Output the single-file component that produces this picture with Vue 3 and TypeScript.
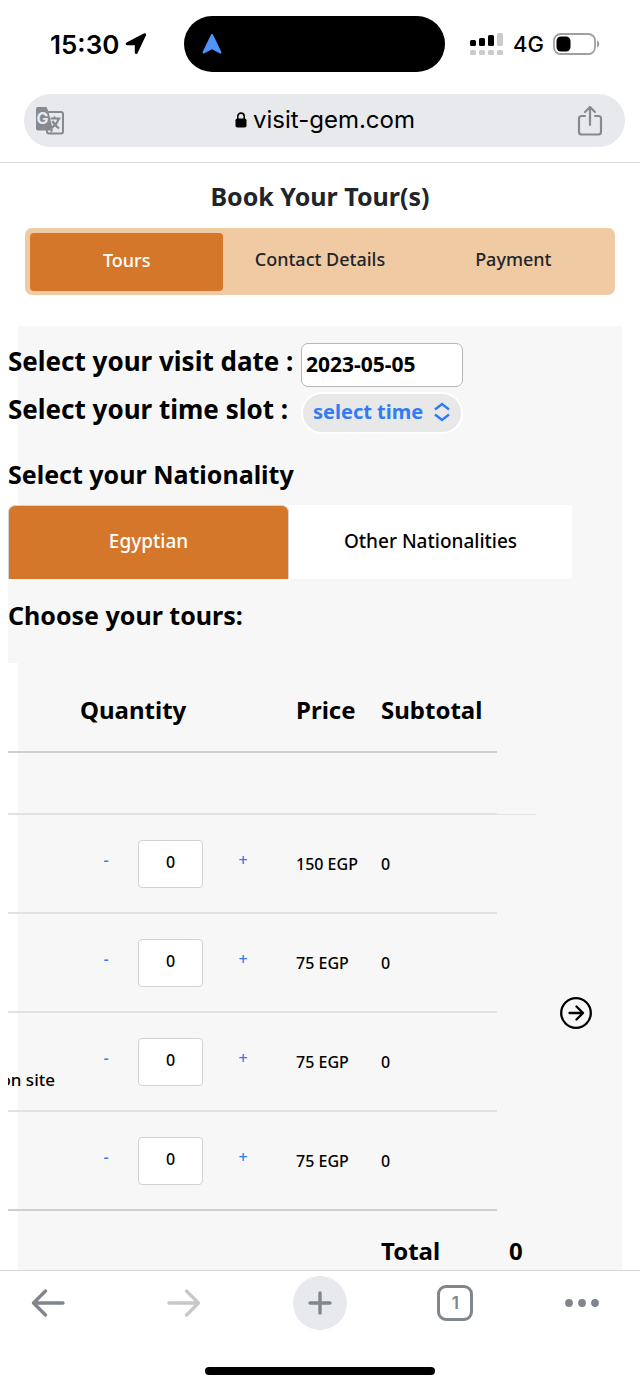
<script setup lang="ts">
import { computed, ref } from 'vue'

interface Ticket {
  id: number
  name: string
  price: number
  quantity: number
}

const steps = ['Tours', 'Contact Details', 'Payment']
const nationalities = ['Egyptian', 'Other Nationalities']

const activeStep = ref(0)
const activeNationality = ref(0)
const visitDate = ref('2023-05-05')
const timeSlot = ref('select time slot')

const tickets = ref<Ticket[]>([
  { id: 1, name: '', price: 150, quantity: 0 },
  { id: 2, name: '', price: 75, quantity: 0 },
  { id: 3, name: 'on site', price: 75, quantity: 0 },
  { id: 4, name: '', price: 75, quantity: 0 },
])

const total = computed(() => tickets.value.reduce((sum, t) => sum + t.price * t.quantity, 0))

function change(ticket: Ticket, by: number) {
  ticket.quantity = Math.max(0, ticket.quantity + by)
}
</script>

<template>
  <div class="screen">
    <header class="browser-top">
      <div class="status">
        <div class="clock">
          <span>15:30</span>
          <svg width="22" height="22" viewBox="0 0 22 22" aria-hidden="true">
            <path d="M20.400 1.600 11.800 19.800c-.3.700-1.200.5-1.200-.2V11.400H2.200c-.8 0-1-.9-.3-1.200L19.600 1z" fill="#000" stroke="#000" stroke-width="1.600" stroke-linejoin="round" />
          </svg>
        </div>
        <div class="island">
          <svg width="20" height="22" viewBox="0 0 20 22" aria-hidden="true">
            <path d="M10 2 1.500 19.500 10 15l8.500 4.500z" fill="#4f94f8" stroke="#4f94f8" stroke-width="2" stroke-linejoin="round" />
          </svg>
        </div>
        <div class="signals">
          <svg width="34" height="24" viewBox="0 0 34 24" aria-hidden="true">
            <g fill="#000">
              <rect x="0" y="8" width="6" height="6" rx="1.500" />
              <rect x="9" y="6" width="6" height="8" rx="1.500" />
              <rect x="18" y="3" width="6" height="11" rx="1.500" />
            </g>
            <g fill="#cbcbcb">
              <rect x="27" y="1" width="6" height="13" rx="1.500" />
              <rect x="0" y="18" width="6" height="5" rx="1.500" />
              <rect x="9" y="18" width="6" height="5" rx="1.500" />
              <rect x="18" y="18" width="6" height="5" rx="1.500" />
              <rect x="27" y="18" width="6" height="5" rx="1.500" />
            </g>
          </svg>
          <span class="network">4G</span>
          <svg width="48" height="22" viewBox="0 0 48 22" aria-hidden="true">
            <rect x="1" y="1" width="41" height="20" rx="6.500" fill="none" stroke="#a0a0a0" stroke-width="1.800" />
            <rect x="3.500" y="3.500" width="14" height="15" rx="4.500" fill="#000" />
            <path d="M44 7.500c3 1 3 6 0 7z" fill="#a0a0a0" />
          </svg>
        </div>
      </div>

      <div class="address">
        <button type="button" class="plain" aria-label="Translate page">
          <svg width="30" height="30" viewBox="0 0 30 30">
            <rect x="12" y="6" width="16" height="21.500" rx="2" fill="#e8e9ed" stroke="#858a8d" stroke-width="2" />
            <path d="M3 1h8.500l1.800 4L18 24.500H3a2 2 0 0 1-2-2V3a2 2 0 0 1 2-2z" fill="#858a8d" />
            <path d="M15.500 24.500H18l-2.500 3z" fill="#858a8d" />
            <text x="1.500" y="18" class="translate-mark">G</text>
            <path d="M15.500 12.500h10M19.500 10.500v2M23.500 12.500c-.8 4-3 6.500-6.500 9M17.500 15c1.500 3.500 4 5.500 6.500 7.500" fill="none" stroke="#858a8d" stroke-width="2.200" />
          </svg>
        </button>
        <div class="site">
          <svg width="12" height="16" viewBox="0 0 12 16" aria-hidden="true">
            <rect x="0.500" y="6.500" width="11" height="9" rx="1.800" fill="#000" />
            <path d="M2.800 7V4.300a3.200 3.200 0 0 1 6.400 0V7" fill="none" stroke="#000" stroke-width="1.600" />
          </svg>
          <span>visit-gem.com</span>
        </div>
        <button type="button" class="plain" aria-label="Share">
          <svg width="26" height="32" viewBox="0 0 26 32" fill="none" stroke="#858a8d" stroke-width="2.200" stroke-linecap="round" stroke-linejoin="round">
            <path d="M8 11H4.500A2.500 2.500 0 0 0 2 13.500V27a2.500 2.500 0 0 0 2.500 2.500h17A2.500 2.500 0 0 0 24 27V13.500a2.500 2.500 0 0 0-2.500-2.500H18M13 20V2M8 7l5-5 5 5" />
          </svg>
        </button>
      </div>
    </header>

    <main>
      <h1>Book Your Tour(s)</h1>
      <nav class="steps" aria-label="Booking steps">
        <button
          v-for="(step, i) in steps"
          :key="step"
          type="button"
          :class="{ active: i === activeStep }"
          @click="activeStep = i"
        >{{ step }}</button>
      </nav>

      <section class="booking">
        <div class="content">
          <div class="fields">
            <label for="visit-date">Select your visit date :</label>
            <input id="visit-date" v-model="visitDate" type="text" class="date">
            <label for="time-slot">Select your time slot :</label>
            <div class="slot">
              <select id="time-slot" v-model="timeSlot">
                <option>select time slot</option>
              </select>
              <svg width="18" height="20" viewBox="0 0 18 20" aria-hidden="true">
                <path d="M2 7.500 9 2l7 5.500M2 12.500 9 18l7-5.500" fill="none" stroke="#2f7cf6" stroke-width="2.400" />
              </svg>
            </div>
          </div>

          <h2 class="nationality-title">Select your Nationality</h2>
          <div class="tabs" role="tablist">
            <button
              v-for="(name, i) in nationalities"
              :key="name"
              type="button"
              role="tab"
              :aria-selected="i === activeNationality"
              :class="{ active: i === activeNationality }"
              @click="activeNationality = i"
            >{{ name }}</button>
          </div>
          <h2 class="tours-title">Choose your tours:</h2>

          <div class="tickets">
            <table>
              <colgroup>
                <col class="c-name"><col class="c-quantity"><col class="c-price"><col class="c-subtotal"><col class="c-extra">
              </colgroup>
              <thead>
                <tr>
                  <th></th>
                  <th scope="col">Quantity</th>
                  <th scope="col">Price</th>
                  <th scope="col">Subtotal</th>
                  <td></td>
                </tr>
              </thead>
              <tbody>
                <tr class="group">
                  <td colspan="4"></td>
                  <td></td>
                </tr>
                <tr v-for="t in tickets" :key="t.id" class="ticket">
                  <td class="name"><div>{{ t.name }}</div></td>
                  <td class="quantity">
                    <div class="stepper">
                      <button type="button" aria-label="Remove one" @click="change(t, -1)">-</button>
                      <input v-model.number="t.quantity" type="text" inputmode="numeric" aria-label="Quantity">
                      <button type="button" aria-label="Add one" @click="change(t, 1)">+</button>
                    </div>
                  </td>
                  <td>{{ t.price }} EGP</td>
                  <td>{{ t.price * t.quantity }}</td>
                  <td></td>
                </tr>
              </tbody>
              <tfoot>
                <tr>
                  <td colspan="3"></td>
                  <th scope="row">Total</th>
                  <td class="total">{{ total }}</td>
                </tr>
              </tfoot>
            </table>
            <button type="button" class="plain next" aria-label="Scroll right">
              <svg width="32" height="32" viewBox="0 0 32 32" fill="none" stroke="#000" stroke-width="2.300" stroke-linecap="round" stroke-linejoin="round">
                <circle cx="16" cy="16" r="14.800" />
                <path d="M9.500 16h13.500M16.500 9.500 23 16l-6.500 6.500" />
              </svg>
            </button>
          </div>
        </div>
      </section>
    </main>

    <footer class="toolbar">
      <div class="tools">
        <button type="button" class="plain" aria-label="Back">
          <svg width="34" height="30" viewBox="0 0 34 30" fill="none" stroke="#80868b" stroke-width="3.400" stroke-linecap="round" stroke-linejoin="round">
            <path d="M32 15H2.500M14.500 3l-12 12 12 12" />
          </svg>
        </button>
        <button type="button" class="plain" aria-label="Forward">
          <svg width="34" height="30" viewBox="0 0 34 30" fill="none" stroke="#c8c8c8" stroke-width="3.400" stroke-linecap="round" stroke-linejoin="round">
            <path d="M2 15h29.500M19.500 3l12 12-12 12" />
          </svg>
        </button>
        <button type="button" class="plain new-tab" aria-label="New tab">
          <svg width="24" height="24" viewBox="0 0 24 24" fill="none" stroke="#80868b" stroke-width="3.400" stroke-linecap="round">
            <path d="M12 2v20M2 12h20" />
          </svg>
        </button>
        <button type="button" class="plain" aria-label="Open tabs"><span class="tab-count">1</span></button>
        <button type="button" class="plain more" aria-label="More">
          <svg width="34" height="8" viewBox="0 0 34 8" fill="#80868b">
            <circle cx="4" cy="4" r="3.900" /><circle cx="17" cy="4" r="3.900" /><circle cx="30" cy="4" r="3.900" />
          </svg>
        </button>
      </div>
      <div class="home"></div>
    </footer>
  </div>
</template>

<style>
body {
  background: #fff;
}
</style>

<style scoped>
.screen,
.screen * {
  box-sizing: border-box;
}
.screen {
  display: flex;
  flex-direction: column;
  min-height: 100vh;
  overflow: hidden;
  color: #000;
  font-family: "Noto Sans", "Open Sans", sans-serif;
}
button,
input,
select {
  font: inherit;
  color: inherit;
  margin: 0;
}
button {
  cursor: pointer;
}
svg {
  display: block;
  flex: none;
}
.plain {
  display: flex;
  align-items: center;
  justify-content: center;
  padding: 0;
  border: 0;
  background: none;
}

/* Browser chrome */
.browser-top {
  padding: 16px 0 15px;
  border-bottom: 1px solid #dadbdd;
  font-family: Inter, Roboto, sans-serif;
}
.status {
  display: grid;
  grid-template-columns: 184fr 261px 195fr;
  align-items: center;
}
.clock {
  display: flex;
  align-items: center;
  gap: 6px;
  padding-left: 50px;
  font-size: 26px;
  font-weight: 600;
}
.island {
  display: flex;
  align-items: center;
  height: 56px;
  padding-left: 18px;
  border-radius: 28px;
  background: #000;
}
.signals {
  display: flex;
  align-items: center;
  gap: 9px;
  padding-left: 25px;
}
.network {
  font-size: 22px;
  font-weight: 500;
}
.address {
  display: grid;
  grid-template-columns: 30px 1fr 30px;
  align-items: center;
  height: 53px;
  margin: 22px 15px 0 24px;
  padding: 0 20px 0 11px;
  border-radius: 27px;
  background: #e8e9ed;
}
.translate-mark {
  fill: #e8e9ed;
  font: 700 16px Inter, sans-serif;
}
.site {
  display: flex;
  align-items: center;
  justify-content: center;
  gap: 6px;
  padding: 0 0 2px 10px;
  font-size: 24px;
}

/* Page */
main {
  display: flex;
  flex: 1;
  flex-direction: column;
}
h1,
h2 {
  margin: 0;
  font-size: 25px;
  line-height: 36px;
  font-weight: 700;
}
h1 {
  padding: 15px 0 14px;
  color: #212529;
  text-align: center;
}
.steps {
  display: grid;
  grid-template-columns: repeat(3, 1fr);
  height: 67px;
  margin: 0 25px;
  padding: 5px 5px 4px;
  border-radius: 7px;
  background: #f0caa3;
}
.steps button {
  padding: 0 0 7px;
  border: 0;
  border-radius: 4px;
  background: none;
  color: #212529;
  font-size: 18px;
  font-weight: 500;
}
.steps .active {
  padding: 0 0 5px;
  background: #d4772a;
  color: #fff;
}
.booking {
  flex: 1;
  margin: 31px 18px 0;
  background: #f7f7f7;
}
.content {
  margin-left: -10px;
  padding-top: 17px;
}
.fields {
  display: grid;
  grid-template-columns: 293px 162px;
  row-gap: 4px;
  font-size: 26px;
  font-weight: 700;
}
.fields label {
  line-height: 36px;
  white-space: nowrap;
}
.date {
  width: 100%;
  height: 44px;
  padding: 0 4px 2px;
  border: 1px solid #b5b5b5;
  border-radius: 7px;
  background: #fff;
  font-size: 21px;
}
.slot {
  position: relative;
}
select {
  width: 100%;
  height: 42px;
  padding: 0 37px 3px 10px;
  border: 2px solid #fff;
  border-radius: 21px;
  background: #e8e8e8;
  appearance: none;
  overflow: hidden;
  color: #2f7cf6;
  font-size: 20px;
}
.slot svg {
  position: absolute;
  top: 11px;
  right: 12px;
  pointer-events: none;
}
.nationality-title {
  padding: 22px 0 13px;
}
.tabs {
  display: grid;
  grid-template-columns: 281fr 283fr;
  height: 74px;
  margin-right: 50px;
  background: #fff;
}
.tabs button {
  padding: 0 0 3px;
  border: 0;
  background: none;
  font-size: 19px;
  font-weight: 500;
}
.tabs .active {
  border: 1px solid #d3d6d9;
  border-bottom: 0;
  border-radius: 7px 7px 0 0;
  background: #d4772a;
  color: #fff;
}
.tours-title {
  padding: 18px 0 30px;
  background: #f7f7f7;
}

/* Ticket table */
.tickets {
  position: relative;
}
table {
  width: 528px;
  border-spacing: 0;
  table-layout: fixed;
  font-size: 16px;
  font-weight: 500;
}
.c-name { width: 60px; }
.c-quantity { width: 216px; }
.c-price { width: 85px; }
.c-subtotal { width: 128px; }
.c-extra { width: 39px; }
th,
td {
  padding: 0 0 0 12px;
  text-align: left;
  white-space: nowrap;
}
th,
.total {
  font-size: 24px;
  font-weight: 700;
}
thead tr {
  height: 90px;
}
thead th {
  padding-top: 4px;
  border-bottom: 2px solid #cfcfcf;
}
.group {
  height: 62px;
}
.group td {
  border-bottom: 2px solid #dfe2e6;
}
.group td:last-child {
  border-bottom-width: 1px;
}
.ticket td:not(:last-child) {
  height: 99px;
  border-bottom: 2px solid #dfe2e6;
}
.ticket:last-child td:not(:last-child) {
  border-bottom-color: #cfcfcf;
}
.ticket .name {
  padding: 36px 0 0;
}
.name div {
  display: flex;
  justify-content: flex-end;
  width: 47px;
  overflow: hidden;
  font-size: 17px;
}
.ticket .quantity {
  padding: 0;
}
.stepper {
  display: grid;
  grid-template-columns: 64px 65px 80px;
  margin-left: 6px;
}
.stepper button {
  padding: 0 0 8px;
  border: 0;
  background: none;
  color: #2f7cf6;
}
.stepper input {
  width: 100%;
  height: 48px;
  padding: 0 0 4px;
  border: 1px solid #d0d2d4;
  border-radius: 4px;
  background: #fff;
  text-align: center;
}
tfoot tr {
  height: 58px;
}
tfoot th,
tfoot td {
  padding-top: 20px;
}
.next {
  position: absolute;
  top: 334px;
  right: 30px;
}

/* Bottom toolbar */
.toolbar {
  border-top: 1px solid #d6d6d8;
  background: #fff;
}
.tools {
  display: flex;
  align-items: center;
  justify-content: space-between;
  padding: 5px 40px 0 21px;
}
.tools button {
  width: 54px;
  height: 54px;
}
.tools .new-tab {
  border-radius: 50%;
  background: #e8e9ed;
}
.tools .more {
  width: 36px;
}
.tab-count {
  width: 36px;
  height: 36px;
  border: 3px solid #80868b;
  border-radius: 9px;
  color: #80868b;
  font: 600 17px/30px Inter, sans-serif;
  text-align: center;
}
.home {
  width: 230px;
  height: 8px;
  margin: 37px auto 12px;
  border-radius: 4px;
  background: #000;
}
</style>
